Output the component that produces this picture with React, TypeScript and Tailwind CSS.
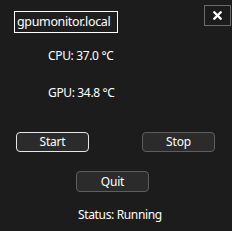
import { X } from 'lucide-react';

export default function App() {
  return (
    <div
      className="w-[232px] h-[231px] bg-[#1c1c1c] text-white overflow-hidden"
      style={{ fontFamily: '"Noto Sans", "Open Sans", sans-serif' }}
    >
      {/* Host + close */}
      <div className="flex justify-between items-start pt-[5px] pl-[14px] pr-[1px]">
        <div className="mt-[6px] w-[104px] h-[22px] border border-white bg-[#1e1e1e] flex items-center pl-[2px] text-[12.5px] tracking-[-0.35px] leading-none whitespace-nowrap overflow-hidden">
          gpumonitor.local
        </div>
        <button className="w-[27px] h-[21px] border border-[#6a6a6a] bg-[#1c1c1c] flex items-center justify-center">
          <X className="w-[13px] h-[13px] text-white" strokeWidth={4.5} />
        </button>
      </div>

      {/* Readings */}
      <div className="pl-[48px] text-[12px] tracking-[-0.35px] leading-none">
        <p className="mt-[17px]">CPU: 37.0 °C</p>
        <p className="mt-[25px]">GPU: 34.8 °C</p>
      </div>

      {/* Controls */}
      <div className="flex justify-between pl-[16px] pr-[17px] mt-[33px] text-[12px] tracking-[-0.2px]">
        <button className="w-[73px] h-[20px] rounded-[4px] border border-[#e6e6e6] bg-[#2b2b2b] leading-none">
          Start
        </button>
        <button className="w-[73px] h-[20px] rounded-[4px] border border-[#5e5e5e] bg-[#2b2b2b] leading-none">
          Stop
        </button>
      </div>
      <div className="pl-[76px] mt-[19px] text-[12px] tracking-[-0.2px]">
        <button className="w-[73px] h-[21px] rounded-[4px] border border-[#5e5e5e] bg-[#2b2b2b] leading-none">
          Quit
        </button>
      </div>
      <p className="pl-[78px] mt-[17px] text-[12px] tracking-[-0.35px] leading-none">Status: Running</p>
    </div>
  );
}
